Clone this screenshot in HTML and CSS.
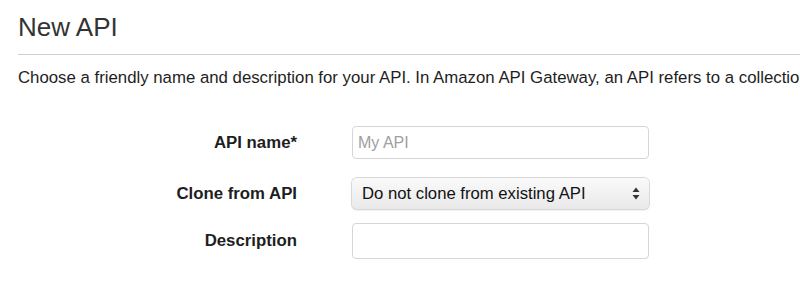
FILE: index.html
```html
<!DOCTYPE html>
<html>
<head>
<meta charset="utf-8">
<link rel="stylesheet" href="styles.css">
</head>
<body>
<div class="page">
  <h1 class="title">New API</h1>
  <p class="intro">Choose a friendly name and description for your API. In Amazon API Gateway, an API refers to a collection of resources and methods.</p>
  <form class="form">
    <div class="row row-name">
      <label class="label">API name*</label>
      <div class="field"><input class="input input-name" type="text" placeholder="My API"></div>
    </div>
    <div class="row row-clone">
      <label class="label">Clone from API</label>
      <div class="field">
        <div class="select">
          <span class="select-text">Do not clone from existing API</span>
          <svg class="select-arrow" width="8" height="13" viewBox="0 0 8 13"><path d="M4 0.5 L7.5 5 H0.5 Z M4 12.5 L7.5 8 H0.5 Z" fill="#333"/></svg>
        </div>
      </div>
    </div>
    <div class="row row-desc">
      <label class="label">Description</label>
      <div class="field"><input class="input input-desc" type="text"></div>
    </div>
  </form>
</div>
</body>
</html>
```

FILE: styles.css
```css
html, body {
  margin: 0;
  padding: 0;
  background: #fff;
  overflow: hidden;
}
body {
  font-family: "Liberation Sans", Arial, Helvetica, sans-serif;
  color: #222;
}
.page {
  padding-left: 18px;
}
.title {
  margin: 0;
  padding-top: 12px;
  font-size: 26px;
  font-weight: normal;
  color: #333;
  line-height: 30px;
  height: 42px;
  border-bottom: 1px solid #cfcfcf;
}
.intro {
  margin: 0;
  padding-top: 14px;
  font-size: 16.8px;
  line-height: 18px;
  white-space: nowrap;
  overflow: hidden;
  color: #1e1e1e;
}
.form {
  margin-top: 39px;
  display: flex;
  flex-direction: column;
}
.row {
  display: grid;
  grid-template-columns: 279px 297px;
  column-gap: 55px;
  align-items: center;
}
.row-clone { margin-top: 19px; }
.row-desc { margin-top: 14px; }
.label {
  text-align: right;
  font-weight: bold;
  font-size: 16.8px;
  color: #1e1e1e;
}
.input {
  box-sizing: border-box;
  width: 297px;
  border: 1px solid #d6d6d6;
  border-radius: 4px;
  font-family: "Liberation Sans", Arial, sans-serif;
  font-size: 16px;
  padding: 0 5px;
  color: #222;
  outline: none;
  display: block;
}
.input-name { height: 33px; }
.input-desc { height: 36px; }
.input::placeholder { color: #a0a0a0; }
.select {
  box-sizing: border-box;
  width: 297px;
  height: 31px;
  border-radius: 5px;
  background: linear-gradient(#fafafa, #e9e9e9);
  box-shadow: 0 0 0 1px #d9d9d9, 0 1px 2px rgba(0,0,0,0.2);
  display: flex;
  align-items: center;
  justify-content: space-between;
  padding: 0 9px 0 10px;
}
.select-text {
  font-size: 16.7px;
  color: #111;
}
.select-arrow { display: block; }
```
